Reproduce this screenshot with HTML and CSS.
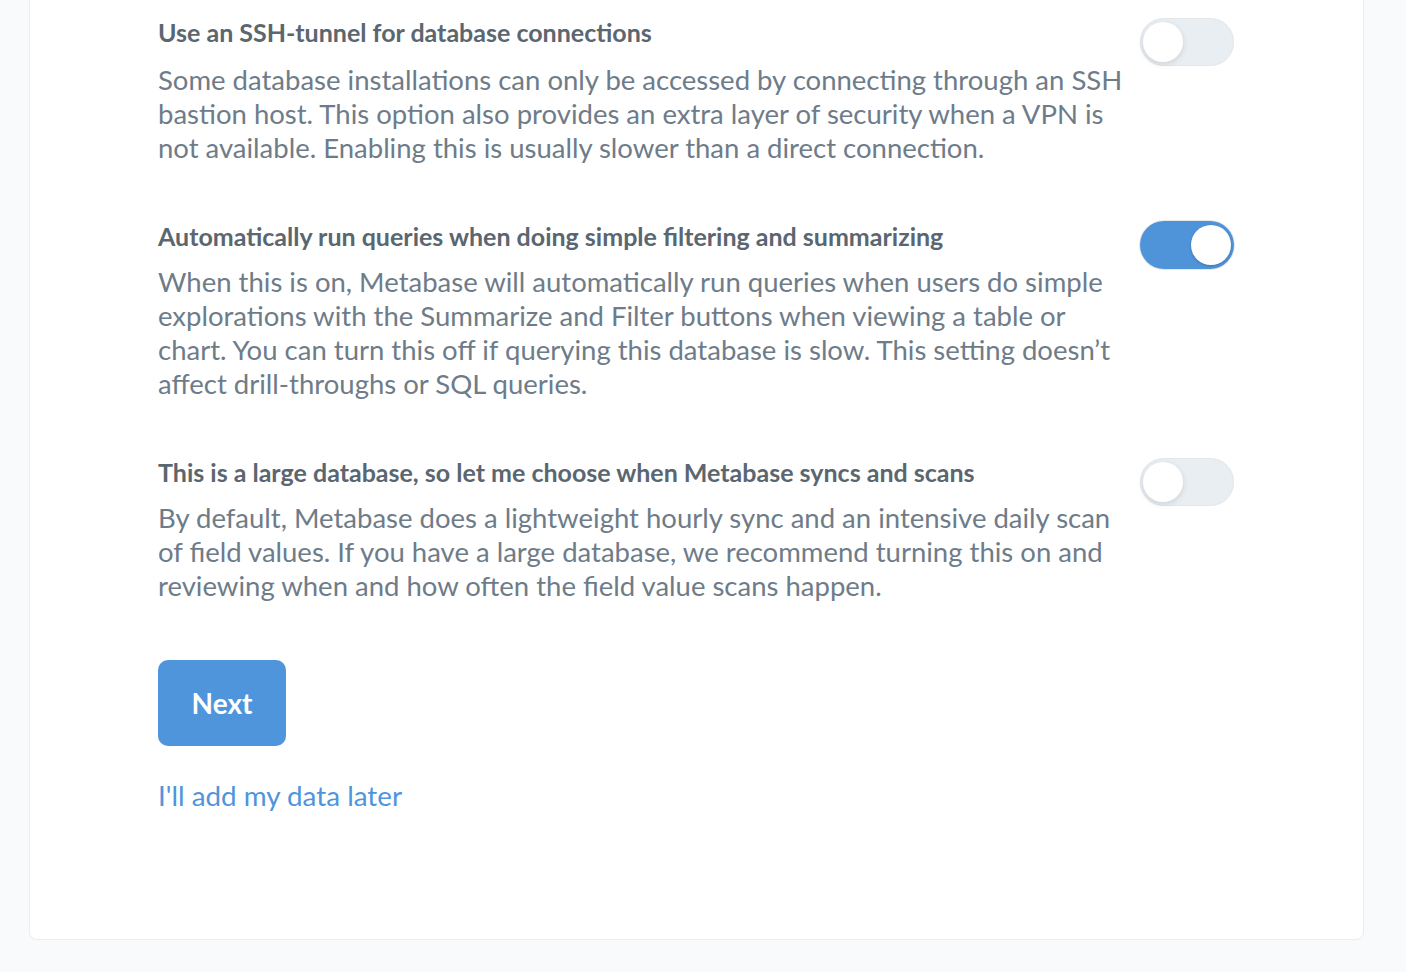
FILE: index.html
```html
<!DOCTYPE html>
<html lang="en">
<head>
<meta charset="utf-8">
<title>Add your data</title>
<link rel="stylesheet" href="styles.css">
</head>
<body>
<main class="card">
  <div class="content">
    <section class="setting setting-ssh">
      <div class="setting-text">
        <h3 class="setting-title">Use an SSH-tunnel for database connections</h3>
        <p class="setting-desc">Some database installations can only be accessed by connecting through an SSH bastion host. This option also provides an extra layer of security when a VPN is not available. Enabling this is usually slower than a direct connection.</p>
      </div>
      <span class="toggle"><span class="knob"></span></span>
    </section>
    <section class="setting setting-auto">
      <div class="setting-text">
        <h3 class="setting-title">Automatically run queries when doing simple filtering and summarizing</h3>
        <p class="setting-desc">When this is on, Metabase will automatically run queries when users do simple explorations with the Summarize and Filter buttons when viewing a table or chart. You can turn this off if querying this database is slow. This setting doesn’t affect drill-throughs or SQL queries.</p>
      </div>
      <span class="toggle on"><span class="knob"></span></span>
    </section>
    <section class="setting setting-large">
      <div class="setting-text">
        <h3 class="setting-title">This is a large database, so let me choose when Metabase syncs and scans</h3>
        <p class="setting-desc">By default, Metabase does a lightweight hourly sync and an intensive daily scan of field values. If you have a large database, we recommend turning this on and reviewing when and how often the field value scans happen.</p>
      </div>
      <span class="toggle"><span class="knob"></span></span>
    </section>
    <div class="actions">
      <button class="btn-primary" type="button">Next</button>
      <a class="skip-link" href="#">I'll add my data later</a>
    </div>
  </div>
</main>
</body>
</html>
```
FILE: styles.css
```css
html, body {
  margin: 0;
  padding: 0;
}
body {
  background: #f9fafb;
  font-family: Lato, "Noto Sans", sans-serif;
  color: #6e7c89;
  height: 972px;
  overflow: hidden;
}
.card {
  margin: 0 42px 0 29px;
  background: #ffffff;
  border: 1px solid #eaecee;
  border-top: none;
  border-radius: 0 0 8px 8px;
  height: 940px;
  box-sizing: border-box;
}
.content {
  padding: 17px 129px 0 128px;
}
.setting {
  display: flex;
  align-items: flex-start;
  margin-bottom: 57px;
}
.setting-ssh {
  margin-bottom: 56px;
}
.setting-auto {
  margin-bottom: 56px;
}
.setting-text {
  flex: 1;
  min-width: 0;
}
.setting-title {
  margin: 0;
  font-size: 25px;
  line-height: 30px;
  font-weight: 700;
  color: #5a6670;
}
.setting-desc {
  margin: 14px 0 0;
  font-size: 27.5px;
  line-height: 34px;
  font-weight: 400;
  color: #6e7c89;
}
.setting-ssh .setting-desc {
  margin-top: 16px;
}
.toggle {
  flex: none;
  position: relative;
  width: 94px;
  height: 48px;
  margin-top: 1px;
  border-radius: 24px;
  background: #e9eef2;
  box-shadow: inset 0 0 0 1px #e3e8ec;
}
.setting-auto .toggle {
  margin-top: 0;
}
.toggle .knob {
  position: absolute;
  top: 4px;
  left: 3px;
  width: 40px;
  height: 40px;
  border-radius: 50%;
  background: #ffffff;
  box-shadow: 0 2px 6px rgba(0, 0, 0, 0.12);
}
.toggle.on {
  background: #4f93d9;
  box-shadow: 0 0 0 1px #e6e9ec;
}
.toggle.on .knob {
  left: auto;
  right: 3px;
  box-shadow: 0 1px 3px rgba(0, 0, 0, 0.2);
}
.actions {
  display: flex;
  flex-direction: column;
  align-items: flex-start;
}
.btn-primary {
  width: 128px;
  height: 86px;
  border: none;
  border-radius: 10px;
  background: #4f95dc;
  color: #ffffff;
  font-family: Lato, "Noto Sans", sans-serif;
  font-size: 28px;
  font-weight: 700;
  cursor: pointer;
  padding: 0;
}
.skip-link {
  margin-top: 33px;
  font-size: 27.8px;
  line-height: 34px;
  color: #4f95dc;
  text-decoration: none;
}
```
